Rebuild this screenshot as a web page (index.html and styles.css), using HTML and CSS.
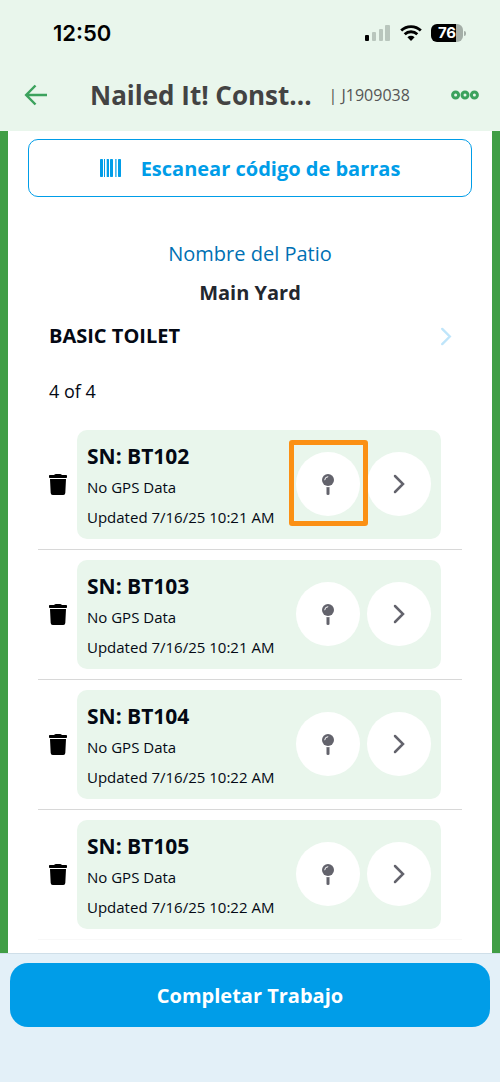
FILE: index.html
```html
<!DOCTYPE html>
<html lang="es">
<head>
<meta charset="utf-8">
<meta name="viewport" content="width=device-width, initial-scale=1">
<title>Nailed It! Construction</title>
<link rel="stylesheet" href="styles.css">
</head>
<body>
<svg class="defs" aria-hidden="true">
  <symbol id="trash" viewBox="0 0 18 21"><path d="M5 1q1-1 2-1h4q1 0 2 1h4.200q.8 0 .8.800v1.400q0 .8-.8.800H.8Q0 4 0 3.200V1.800Q0 1 .8 1zM1 5h16l-.7 14q-.1 2-2 2H3.700q-1.900 0-2-2z"/></symbol>
  <symbol id="pin" viewBox="0 0 12 21"><circle cx="6" cy="6" r="6"/><path class="pin-shine" d="M2.700 6.200A3.600 3.600 0 0 1 6.200 2.700"/><path d="M4.500 13q1.500.3 3 0v7q0 1-1.500 1t-1.500-1z"/></symbol>
  <symbol id="chevron" viewBox="0 0 12 20"><path class="stroke" d="M2 2l8 8-8 8"/></symbol>
</svg>
<div class="app">
  <header class="header">
    <div class="status">
      <span class="clock">12:50</span>
      <div class="indicators">
        <svg width="26" height="18" viewBox="0 0 26 18" aria-hidden="true"><rect y="11" width="4" height="6" rx="1"/><g fill="#b9c6bd"><rect x="7" y="8" width="4" height="9" rx="1"/><rect x="14" y="5" width="4" height="12" rx="1"/><rect x="20" y="1" width="5" height="16" rx="1"/></g></svg>
        <svg width="22" height="16" viewBox="0 0 22 16" aria-hidden="true"><g fill="none" stroke="#000" stroke-width="2.800"><path d="M1.200 5.600a14 14 0 0 1 19.600 0"/><path d="M4.700 9.300a9 9 0 0 1 12.600 0"/></g><path d="M7.400 12.300a5.200 5.200 0 0 1 7.200 0L11 16z"/></svg>
        <div class="battery"><span class="level">76</span><i class="tip"></i></div>
      </div>
    </div>
    <nav class="nav">
      <button class="icon-button" aria-label="Volver"><svg width="24" height="22" viewBox="0 0 24 22"><path d="M11.500 1.500L2.200 11l9.300 9.500M2.200 11H23" fill="none" stroke="#3ca25d" stroke-width="2.500"/></svg></button>
      <h1 class="title">Nailed It! Const...</h1>
      <span class="job">| J1909038</span>
      <button class="icon-button more" aria-label="Más opciones"><svg width="28" height="10" viewBox="0 0 28 10"><g fill="none" stroke="#3ca25d" stroke-width="3"><circle cx="4.600" cy="5" r="3"/><circle cx="14" cy="5" r="3"/><circle cx="23.400" cy="5" r="3"/></g></svg></button>
    </nav>
  </header>
  <main class="content">
    <button class="scan"><svg width="21" height="18" viewBox="0 0 21 18" aria-hidden="true"><rect width="3" height="18" rx=".7"/><rect x="4" width="1" height="18"/><rect x="6.700" width="2.300" height="18" rx=".5"/><rect x="10" width="3" height="18" rx=".7"/><rect x="15.300" width="1.200" height="18"/><rect x="18" width="3" height="18" rx=".7"/></svg><span>Escanear código de barras</span></button>
    <p class="yard-label">Nombre del Patio</p>
    <h2 class="yard">Main Yard</h2>
    <a class="category" href="#units"><span>BASIC TOILET</span><svg width="12" height="19"><use href="#chevron"/></svg></a>
    <p class="count">4 of 4</p>
    <ul class="units" id="units">
      <li class="unit">
        <button class="delete" aria-label="Eliminar BT102"><svg width="18" height="21"><use href="#trash"/></svg></button>
        <article class="card">
          <div class="info"><h3 class="serial">SN: BT102</h3><p>No GPS Data</p><p>Updated 7/16/25 10:21 AM</p></div>
          <div class="pin-slot highlighted"><button class="round" aria-label="Ubicar BT102"><svg width="12" height="21"><use href="#pin"/></svg></button></div>
          <button class="round" aria-label="Abrir BT102"><svg width="12" height="20"><use href="#chevron"/></svg></button>
        </article>
      </li>
      <li class="unit">
        <button class="delete" aria-label="Eliminar BT103"><svg width="18" height="21"><use href="#trash"/></svg></button>
        <article class="card">
          <div class="info"><h3 class="serial">SN: BT103</h3><p>No GPS Data</p><p>Updated 7/16/25 10:21 AM</p></div>
          <div class="pin-slot"><button class="round" aria-label="Ubicar BT103"><svg width="12" height="21"><use href="#pin"/></svg></button></div>
          <button class="round" aria-label="Abrir BT103"><svg width="12" height="20"><use href="#chevron"/></svg></button>
        </article>
      </li>
      <li class="unit">
        <button class="delete" aria-label="Eliminar BT104"><svg width="18" height="21"><use href="#trash"/></svg></button>
        <article class="card">
          <div class="info"><h3 class="serial">SN: BT104</h3><p>No GPS Data</p><p>Updated 7/16/25 10:22 AM</p></div>
          <div class="pin-slot"><button class="round" aria-label="Ubicar BT104"><svg width="12" height="21"><use href="#pin"/></svg></button></div>
          <button class="round" aria-label="Abrir BT104"><svg width="12" height="20"><use href="#chevron"/></svg></button>
        </article>
      </li>
      <li class="unit">
        <button class="delete" aria-label="Eliminar BT105"><svg width="18" height="21"><use href="#trash"/></svg></button>
        <article class="card">
          <div class="info"><h3 class="serial">SN: BT105</h3><p>No GPS Data</p><p>Updated 7/16/25 10:22 AM</p></div>
          <div class="pin-slot"><button class="round" aria-label="Ubicar BT105"><svg width="12" height="21"><use href="#pin"/></svg></button></div>
          <button class="round" aria-label="Abrir BT105"><svg width="12" height="20"><use href="#chevron"/></svg></button>
        </article>
      </li>
    </ul>
  </main>
  <footer class="footer"><button class="complete">Completar Trabajo</button></footer>
</div>
</body>
</html>
```
FILE: styles.css
```css
* { box-sizing: border-box; }
body { margin: 0; font-family: "Open Sans", "Noto Sans", sans-serif; color: #040914; }
h1, h2, h3, p, ul { margin: 0; padding: 0; }
button { margin: 0; padding: 0; border: 0; background: none; font: inherit; color: inherit; cursor: pointer; }
svg { display: block; flex: none; }
.defs { position: absolute; width: 0; height: 0; }
.stroke { fill: none; stroke: currentColor; stroke-width: 2.5; stroke-linecap: round; }
.pin-shine { fill: none; stroke: #fff; stroke-width: 1; }

.app { display: flex; flex-direction: column; min-height: 100vh; }

.header { background: #e9f6ec; }
.status { display: flex; align-items: center; justify-content: space-between; height: 60px; padding: 6px 34px 0 53px; }
.clock { font: 600 22px/28px Inter, sans-serif; color: #000; }
.indicators { display: flex; align-items: center; gap: 9px; }
.battery { display: flex; align-items: center; }
.level { width: 32px; height: 18px; border-radius: 6px; background: linear-gradient(90deg, #000 25px, #a4aea7 25px); color: #fff; font: 700 15px/18px Inter, sans-serif; text-align: center; }
.tip { width: 2px; height: 5px; margin-left: 1px; border-radius: 0 2px 2px 0; background: #a4aea7; }

.nav { display: flex; align-items: center; height: 71px; padding: 0 21px 2px 24px; }
.icon-button { display: flex; align-items: center; height: 44px; }
.title { margin-left: 42px; font-size: 26px; line-height: 36px; font-weight: 700; color: #434343; white-space: nowrap; }
.job { margin-left: 17px; font-size: 16px; line-height: 24px; color: #555; white-space: nowrap; }
.more { margin-left: auto; }

.content { display: flex; flex-direction: column; flex: 1; padding: 8px 20px 0; border: solid #409e45; border-width: 0 8px; background: #fff; }
.scan { display: flex; align-items: center; justify-content: center; gap: 20px; height: 58px; border: 1px solid #009de8; border-radius: 10px; color: #009de8; fill: currentColor; font-size: 20px; font-weight: 700; }
.yard-label { margin-top: 41px; font-size: 20px; line-height: 32px; text-align: center; color: #0070b3; }
.yard { margin-top: 7px; font-size: 20px; line-height: 32px; font-weight: 700; text-align: center; color: #23272e; }
.category { display: flex; align-items: center; justify-content: space-between; margin-top: 11px; padding: 0 20px 0 21px; font-size: 20px; line-height: 32px; font-weight: 700; color: inherit; text-decoration: none; }
.category svg { color: #bfe5fa; }
.count { margin: 25px 0 15px; padding-left: 21px; font-size: 18px; line-height: 28px; }

.units { padding: 0 10px; list-style: none; }
.unit { display: flex; align-items: center; padding: 10px 21px 10px 11px; border-bottom: 1px solid #d8d8d8; }
.unit:last-child { border-color: #f8f8f8; }
.delete { margin-right: 10px; fill: #000; }
.card { display: flex; flex: 1; align-items: center; gap: 7px; padding: 0 10px 1px; border-radius: 10px; background: #e9f6ec; }
.info { flex: 1; padding: 10px 0 6px; font-size: 15px; line-height: 30px; white-space: nowrap; }
.serial { font-size: 21px; line-height: 32px; font-weight: 700; }
.round { display: flex; flex: none; align-items: center; justify-content: center; width: 64px; height: 64px; border-radius: 50%; background: #fff; color: #63636c; fill: currentColor; }
.pin-slot { position: relative; flex: none; }
.highlighted::after { content: ""; position: absolute; inset: -12px -8px -10px -7px; border: 5px solid #fb9014; border-radius: 3px; pointer-events: none; }

.footer { padding: 9px 10px 55px; border-top: 1px solid #cfdfe9; background: #e3f0f8; }
.complete { display: block; width: 100%; height: 64px; border-radius: 18px; background: #009de8; color: #fff; font-size: 20px; font-weight: 700; }
```
